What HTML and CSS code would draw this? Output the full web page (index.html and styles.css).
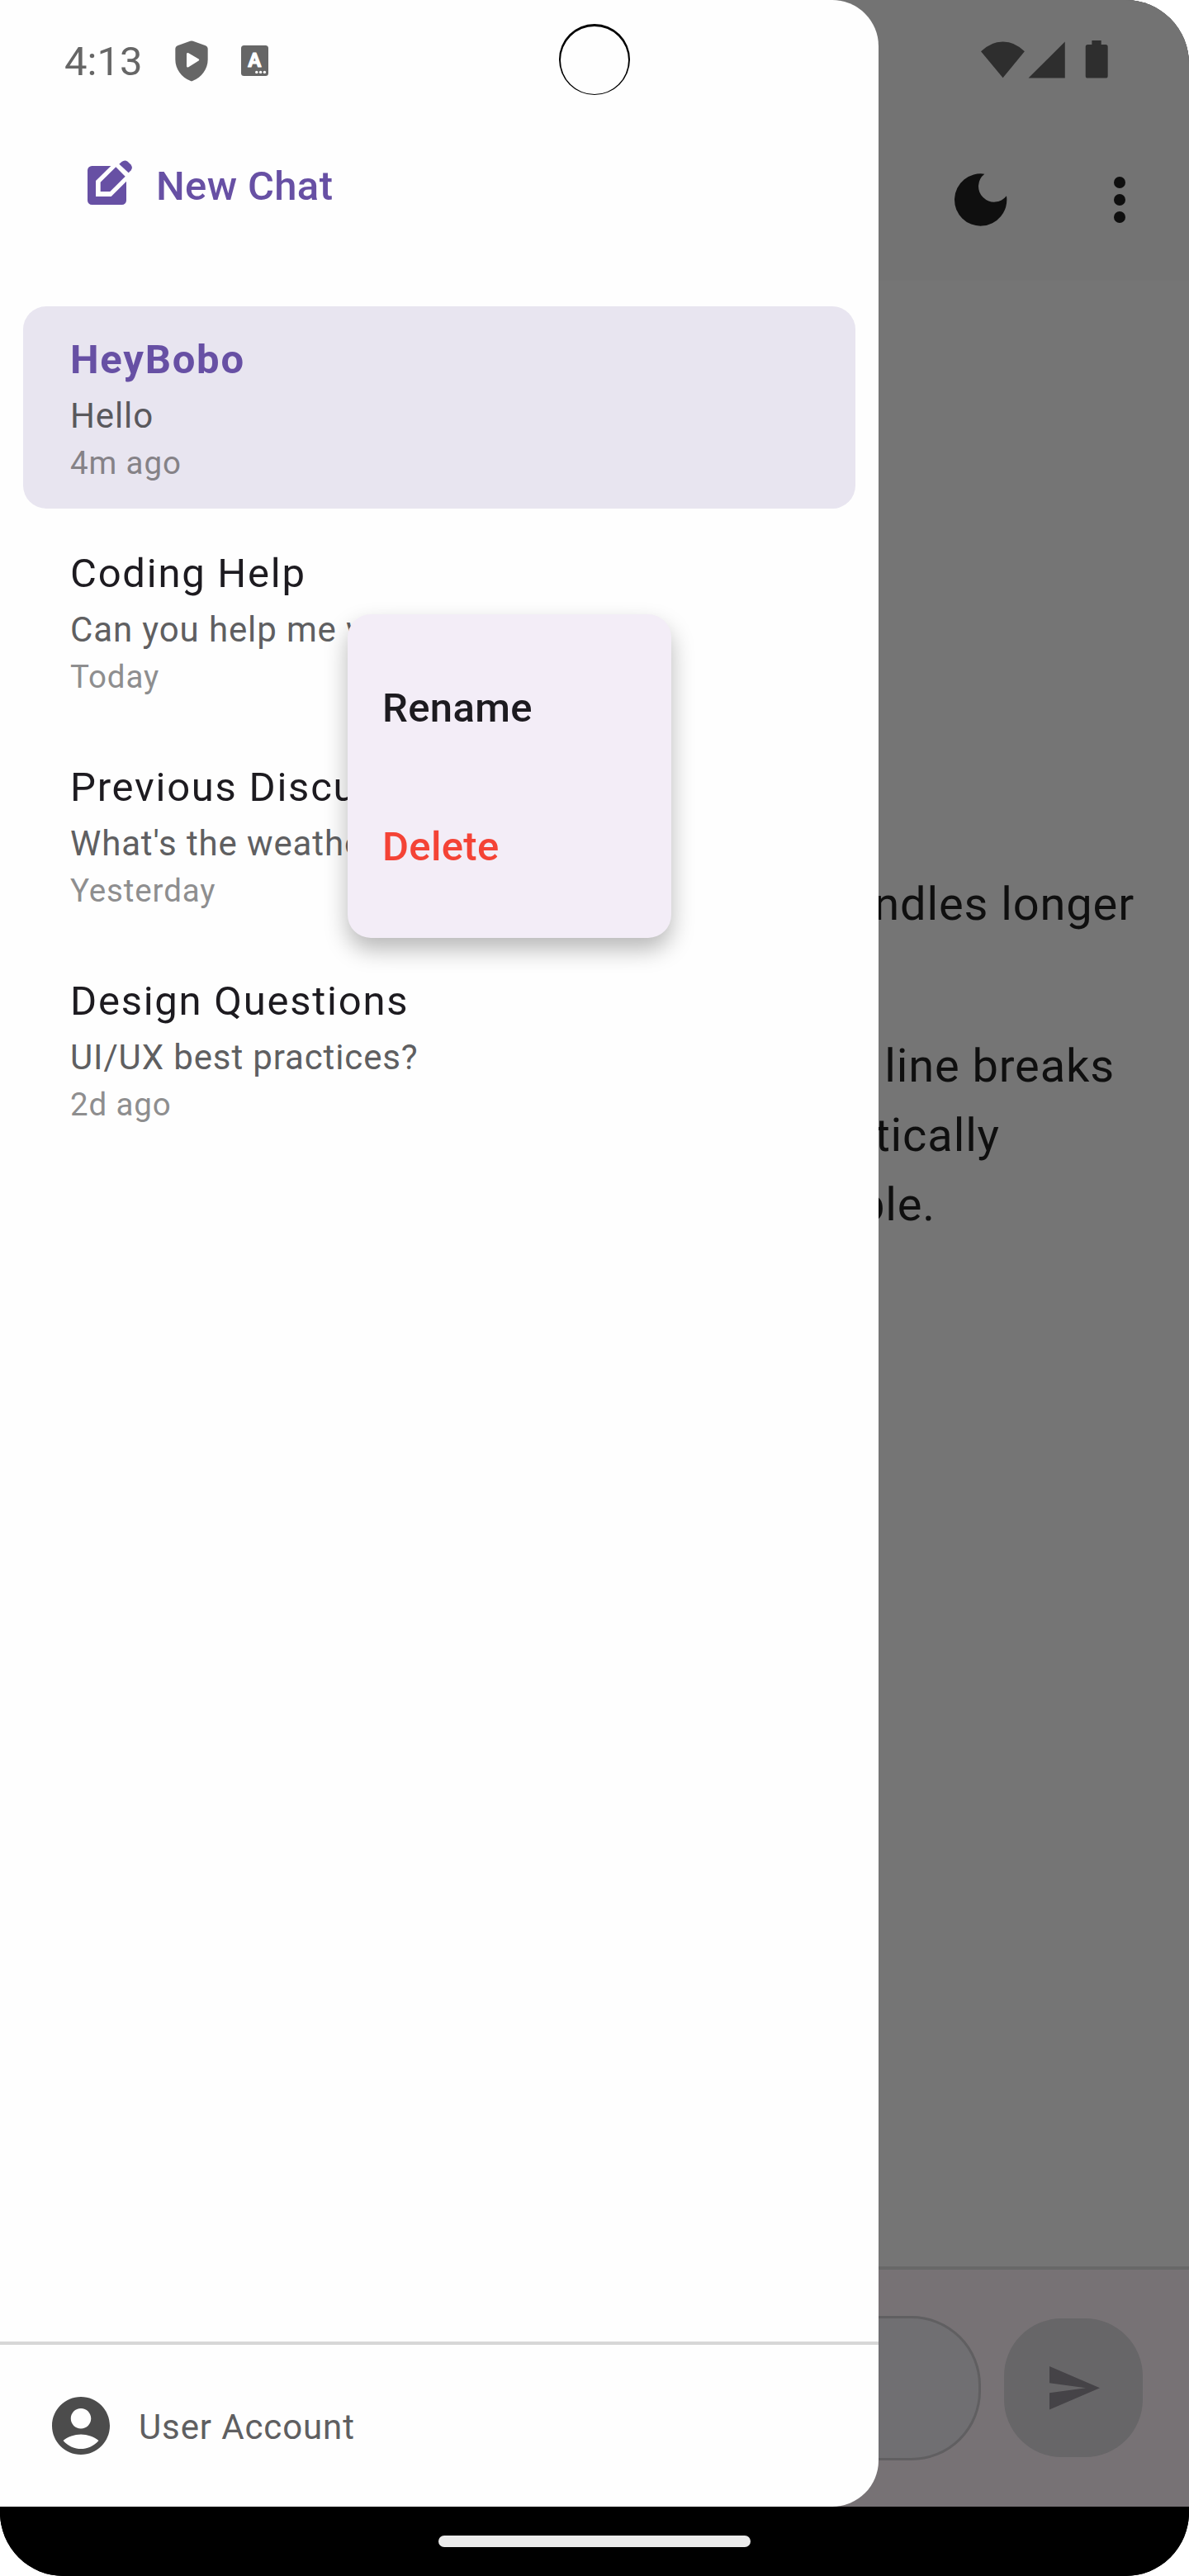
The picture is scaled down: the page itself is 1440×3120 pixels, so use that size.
FILE: index.html
```html
<!DOCTYPE html>
<html lang="en">
<head>
<meta charset="utf-8">
<title>HeyBobo</title>
<link rel="stylesheet" href="styles.css">
</head>
<body>
<div class="device">
  <div class="viewport">
    <main class="chat">
      <header class="appbar">
        <svg class="moon" viewBox="588 630 192 192"><path d="M697 632A95 95 0 1 0 777 712A57 57 0 1 1 697 632Z"/></svg>
        <svg class="dots" viewBox="0 0 14 56"><circle cx="7" cy="7" r="7"/><circle cx="7" cy="28" r="7"/><circle cx="7" cy="49" r="7"/></svg>
      </header>
      <div class="messages">
        <p class="line line-first">handles longer</p>
        <p class="line line-second">line breaks</p>
        <p class="line line-third">automatically</p>
        <p class="line line-fourth">possible.</p>
      </div>
      <footer class="composer">
        <div class="field"></div>
        <div class="send"><svg class="send-icon" viewBox="0 0 61 53"><path d="M0 0L61 26.3L0 52.5V32.3L44 26.3L0 20.2Z"/></svg></div>
      </footer>
    </main>
    <aside class="drawer">
      <div class="new-chat">
        <svg class="compose" viewBox="315 579 168 168"><path d="M403 603H334a16 16 0 0 0-16 16V728a16 16 0 0 0 16 16H443a16 16 0 0 0 16-16V659L404 714H348V657Z"/><path d="M421 607L455 641L400 696H365V662Z"/><path d="M433 596L442 588Q453 579 464 587L475 598Q484 609 476 619L467 628Z"/></svg>
        <span>New Chat</span>
      </div>
      <nav class="history">
        <div class="item active"><div class="title">HeyBobo</div><div class="preview">Hello</div><div class="time">4m ago</div></div>
        <div class="item"><div class="title">Coding Help</div><div class="preview">Can you help me with this?</div><div class="time">Today</div></div>
        <div class="item"><div class="title">Previous Discussion</div><div class="preview">What's the weather</div><div class="time">Yesterday</div></div>
        <div class="item"><div class="title">Design Questions</div><div class="preview">UI/UX best practices?</div><div class="time">2d ago</div></div>
      </nav>
      <div class="account">
        <svg class="avatar" viewBox="0 0 24 24"><path d="M12 2C6.48 2 2 6.48 2 12s4.48 10 10 10 10-4.48 10-10S17.52 2 12 2zm0 4c1.93 0 3.5 1.57 3.5 3.5S13.93 13 12 13s-3.5-1.57-3.5-3.5S10.07 6 12 6zm0 14c-2.03 0-4.43-.82-6.14-2.88C7.55 15.8 9.68 15 12 15s4.45.8 6.14 2.12C16.43 19.18 14.03 20 12 20z"/></svg>
        <span class="account-name">User Account</span>
      </div>
      <div class="menu">
        <div class="menu-item">Rename</div>
        <div class="menu-item danger">Delete</div>
      </div>
    </aside>
    <div class="statusbar">
      <span class="clock">4:13</span>
      <svg class="shield" viewBox="634 146 120 149"><path fill-rule="evenodd" d="M689 148Q694 146 699 148L745 164Q753 167 753 175V215C753 250 730 279 699 292Q694 295 689 292C658 279 635 250 635 215V175Q635 167 643 164ZM676 194V239Q677 245 683 242L720 219Q724 216 720 213L683 191Q677 189 676 194Z"/></svg>
      <svg class="keyboard" viewBox="0 0 33 37"><rect width="33" height="37" rx="3.5"/><text x="16.3" y="26.3">A</text><circle cx="18.8" cy="32.4" r="1.7"/><circle cx="23.6" cy="32.4" r="1.7"/><circle cx="28.4" cy="32.4" r="1.7"/></svg>
      <svg class="camera" viewBox="0 0 86 86"><path fill-rule="evenodd" d="M43 0A43 43 0 1 1 43 86A43 43 0 1 1 43 0ZM43 3A41 41 0 1 0 43 85A41 41 0 1 0 43 3Z"/></svg>
      <svg class="signals" viewBox="684 147 463 138"><path d="M684 187Q719 151 764 151T843 187L764 283Z"/><path d="M857 284L990 151V284Z"/><path d="M1088 147H1122V162H1138a8 8 0 0 1 8 8V276a8 8 0 0 1-8 8H1073a8 8 0 0 1-8-8V170a8 8 0 0 1 8-8H1088Z"/></svg>
    </div>
  </div>
  <div class="navbar"><div class="handle"></div></div>
</div>
</body>
</html>
```
FILE: styles.css
```css
* { box-sizing: border-box; }
body { margin: 0; background: #fff; font-family: Roboto, "Liberation Sans", sans-serif; }
p { margin: 0; }
svg { display: block; flex: none; }

.device { width: 1440px; height: 3120px; display: flex; flex-direction: column; overflow: hidden; border-radius: 0 77px 77px 77px; background: #000; }
.viewport { height: 3036px; display: grid; grid-template: 3036px / 1440px; background: #757575; }
.chat, .drawer, .statusbar { grid-area: 1 / 1; }

.chat { display: flex; flex-direction: column; color: #0f0f0f; }
.appbar { height: 340px; padding: 210px 77px 0 0; display: flex; justify-content: flex-end; gap: 129px; background: #737373; }
.moon { width: 64px; height: 64px; fill: #0f0f0f; }
.dots { width: 14px; height: 56px; margin-top: 4px; fill: #0f0f0f; }
.messages { flex: 1; padding-top: 713px; text-align: right; font-size: 56px; line-height: 84px; letter-spacing: 0.875px; }
.line-first { padding-right: 66px; margin-bottom: 112px; }
.line-second { padding-right: 90px; }
.line-third { padding-right: 229px; }
.line-fourth { padding-right: 307px; }
.composer { height: 291px; padding: 56px 56px 0 0; display: flex; justify-content: flex-end; gap: 28px; border-top: 4px solid #686868; background: #777275; }
.field { width: 900px; height: 175px; border: 3.5px solid #605f61; border-radius: 84px; background: #706f72; }
.send { width: 168px; height: 168px; margin-top: 3px; padding-left: 55px; display: flex; align-items: center; border-radius: 70px; background: #676668; }
.send-icon { width: 61px; height: 53px; fill: #454347; }

.drawer { position: relative; width: 1064px; display: flex; flex-direction: column; border-radius: 0 56px 56px 0; background: #fefefe; }
.new-chat { height: 371px; padding: 193px 0 0 105px; display: flex; align-items: flex-start; gap: 28px; color: #6750a4; font-size: 49px; line-height: 66px; font-weight: 500; letter-spacing: 0.35px; }
.compose { width: 56px; height: 56px; fill: #6750a4; }
.history { flex: 1; padding: 0 28px; display: flex; flex-direction: column; gap: 14px; }
.item { height: 245px; padding: 30px 57px 0; border-radius: 28px; white-space: nowrap; }
.active { background: #e8e5f0; }
.title { font-size: 49px; line-height: 70px; letter-spacing: 1.75px; color: #1d1b20; }
.active .title { font-weight: 700; color: #6750a4; }
.preview { margin-top: 5px; font-size: 42px; line-height: 56px; letter-spacing: 0.875px; color: #5f5f61; }
.active .preview { color: #59585d; }
.time { margin-top: 1px; font-size: 38.5px; line-height: 56px; letter-spacing: 0.875px; color: #8e8e8f; }
.active .time { color: #858287; }
.account { height: 200px; padding-left: 56px; display: flex; align-items: center; gap: 28px; border-top: 4px solid #d7d7d7; font-size: 42px; line-height: 56px; letter-spacing: 0.875px; color: #5f5f61; }
.account-name { padding-top: 4px; }
.avatar { width: 84px; height: 84px; fill: #4c4c4c; }

.menu { position: absolute; left: 421px; top: 744px; width: 392px; height: 392px; padding: 30px 0 26px; border-radius: 28px; background: #f3edf7; box-shadow: 0 14px 28px rgba(0,0,0,.28); }
.menu-item { height: 168px; padding-left: 42px; font-size: 49px; line-height: 168px; font-weight: 500; letter-spacing: 0.35px; color: #1d1b20; }
.danger { color: #f44336; }

.statusbar { z-index: 1; height: 144px; padding-left: 78px; display: flex; color: #666; fill: #666; }
.clock { width: 134px; font-size: 49px; line-height: 150px; }
.shield { width: 40px; height: 50px; margin-top: 49px; }
.keyboard { width: 33px; height: 37px; margin: 55px 0 0 40px; }
.keyboard text { font: 700 24px Roboto, "Liberation Sans", sans-serif; text-anchor: middle; fill: #fff; stroke: #fff; stroke-width: 1; stroke-linejoin: round; }
.keyboard circle { fill: #fff; }
.camera { width: 86px; height: 86px; margin: 29px 0 0 352px; fill: #000; }
.signals { width: 154px; height: 46px; margin: 49px 0 0 425px; fill: #2e2e2e; }

.navbar { height: 84px; padding-top: 35px; display: flex; justify-content: center; align-items: flex-start; background: #000; }
.handle { width: 378px; height: 14px; border-radius: 7px; background: #ebebeb; }
```
